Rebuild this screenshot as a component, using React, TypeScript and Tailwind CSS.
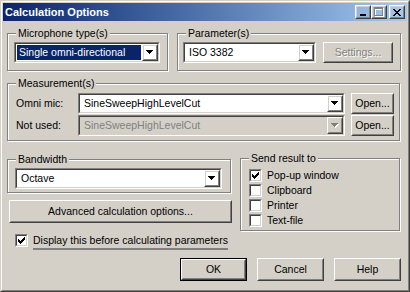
import type { ReactNode } from "react";

// classic win2000 bevels
function Raised({ className = "", children }: { className?: string; children?: ReactNode }) {
  return (
    <div className={`border border-t-white border-l-white border-r-[#404040] border-b-[#404040] ${className}`}>
      <div className="h-full w-full border border-t-[#D4D0C8] border-l-[#D4D0C8] border-r-[#808080] border-b-[#808080] flex items-center justify-center">
        {children}
      </div>
    </div>
  );
}

function Sunken({
  className = "",
  inner = "bg-white",
  children
}: {
  className?: string;
  inner?: string;
  children?: ReactNode;
}) {
  return (
    <div className={`border border-t-[#808080] border-l-[#808080] border-r-white border-b-white ${className}`}>
      <div className={`h-full w-full border border-t-[#404040] border-l-[#404040] border-r-[#D4D0C8] border-b-[#D4D0C8] ${inner}`}>
        {children}
      </div>
    </div>
  );
}

function Arrow({ disabled }: { disabled?: boolean }) {
  const d = "M0 0H7V1H6V2H5V3H4V4H3V3H2V2H1V1H0Z";
  return (
    <svg width="8" height="5" viewBox="0 0 8 5" shapeRendering="crispEdges">
      {disabled && <path d={d} fill="#fff" transform="translate(1 1)" />}
      <path d={d} fill={disabled ? "#808080" : "#000"} />
    </svg>
  );
}

function Combo({
  value,
  className,
  selected,
  disabled
}: {
  value: string;
  className: string;
  selected?: boolean;
  disabled?: boolean;
}) {
  return (
    <Sunken className={`h-[21px] ${className}`} inner={disabled ? "bg-[#D4D0C8]" : "bg-white"}>
      <div className="flex h-full">
        <div className="flex-1 flex items-center p-px min-w-0">
          {selected ? (
            <span className="h-full w-full flex items-center bg-[#0A246A] text-white pl-[2px]">{value}</span>
          ) : (
            <span className={`pl-[3px] ${disabled ? "text-[#808080]" : ""}`}>{value}</span>
          )}
        </div>
        <Raised className="w-[16px] h-full shrink-0">
          <Arrow disabled={disabled} />
        </Raised>
      </div>
    </Sunken>
  );
}

function Button({
  label,
  className,
  disabled,
  isDefault
}: {
  label: string;
  className: string;
  disabled?: boolean;
  isDefault?: boolean;
}) {
  const text = disabled ? (
    <span className="text-[#808080] [text-shadow:1px_1px_0_#fff]">{label}</span>
  ) : (
    <span>{label}</span>
  );
  if (isDefault) {
    return (
      <div className={`border border-black ${className}`}>
        <Raised className="w-full h-full">{text}</Raised>
      </div>
    );
  }
  return <Raised className={className}>{text}</Raised>;
}

function Check({ checked }: { checked?: boolean }) {
  return (
    <Sunken className="w-[13px] h-[13px] shrink-0">
      {checked && (
        <svg width="7" height="7" viewBox="0 0 7 7" shapeRendering="crispEdges" className="m-px">
          <path
            d="M6 0H7V3H6V4H5V5H4V6H3V7H2V6H1V5H0V2H1V3H2V4H3V3H4V2H5V1H6Z"
            fill="#000"
          />
        </svg>
      )}
    </Sunken>
  );
}

function Group({ label, className, children }: { label: string; className: string; children?: ReactNode }) {
  return (
    <div className={`relative border border-[#808080] shadow-[inset_1px_1px_0_#fff,1px_1px_0_#fff] ${className}`}>
      <span className="absolute left-[8px] -top-[7px] px-[2px] bg-[#D4D0C8] leading-[13px] whitespace-nowrap">
        {label}
      </span>
      {children}
    </div>
  );
}

function CheckRow({ label, checked }: { label: string; checked?: boolean }) {
  return (
    <div className="flex items-center h-[15px] gap-[5px]">
      <Check checked={checked} />
      <span>{label}</span>
    </div>
  );
}

export default function App() {
  return (
    <div className="w-[410px] h-[292px] bg-[#D4D0C8] font-['Liberation_Sans',Arial,sans-serif] text-[10.5px] text-black border border-t-[#D4D0C8] border-l-[#D4D0C8] border-r-[#404040] border-b-[#404040]">
      <div className="h-full border border-t-white border-l-white border-r-[#808080] border-b-[#808080] p-px flex flex-col">
        {/* Title bar */}
        <div className="h-[18px] shrink-0 flex items-center bg-gradient-to-r from-[#0A246A] to-[#A6CAF0] pl-[2px] pr-[2px]">
          <span className="flex-1 text-white font-bold text-[11px]">Calculation Options</span>
          <Raised className="w-[16px] h-[14px]">
            <svg width="8" height="7" viewBox="0 0 8 7" shapeRendering="crispEdges">
              <rect x="1" y="5" width="6" height="2" fill="#000" />
            </svg>
          </Raised>
          <Raised className="w-[16px] h-[14px]">
            <svg width="10" height="10" viewBox="0 0 10 10" shapeRendering="crispEdges">
              <path d="M1 1H10V10H1ZM2 3V9H9V3Z" fill="#fff" fillRule="evenodd" />
              <path d="M0 0H9V9H0ZM1 2V8H8V2Z" fill="#808080" fillRule="evenodd" />
            </svg>
          </Raised>
          <Raised className="w-[16px] h-[14px] ml-[2px]">
            <svg width="8" height="7" viewBox="0 0 8 7" shapeRendering="crispEdges">
              <path
                d="M0 0H2V1H3V2H5V1H6V0H8V1H7V2H6V3H5V4H6V5H7V6H8V7H6V6H5V5H3V6H2V7H0V6H1V5H2V4H3V3H2V2H1V1H0Z"
                fill="#000"
              />
            </svg>
          </Raised>
        </div>

        {/* Body */}
        <div className="flex flex-col pl-[4px]">
          <div className="flex mt-[12px]">
            <Group label="Microphone type(s)" className="w-[161px] h-[38px] pl-[6px] pt-[8px]">
              <Combo value="Single omni-directional" className="w-[146px]" selected />
            </Group>
            <Group label="Parameter(s)" className="ml-[9px] w-[224px] h-[38px] pl-[5px] pt-[8px] flex items-start">
              <Combo value="ISO 3382" className="w-[133px]" />
              <Button label="Settings..." className="ml-[7px] w-[70px] h-[21px]" disabled />
            </Group>
          </div>

          <Group label="Measurement(s)" className="mt-[12px] w-[393px] h-[58px] pl-[8px] pt-[9px] flex flex-col gap-px">
            <div className="flex items-center">
              <span className="w-[62px]">Omni mic:</span>
              <Combo value="SineSweepHighLevelCut" className="w-[267px]" />
              <Button label="Open..." className="ml-[6px] w-[43px] h-[21px]" />
            </div>
            <div className="flex items-center">
              <span className="w-[62px]">Not used:</span>
              <Combo value="SineSweepHighLevelCut" className="w-[267px]" disabled />
              <Button label="Open..." className="ml-[6px] w-[43px] h-[21px]" />
            </div>
          </Group>

          <div className="flex mt-[17px] items-start">
            <div className="flex flex-col w-[224px]">
              <Group label="Bandwidth" className="mt-px h-[34px] pl-[7px] pt-[8px]">
                <Combo value="Octave" className="w-[207px]" />
              </Group>
              <Button label="Advanced calculation options..." className="mt-[7px] ml-[2px] w-[223px] h-[23px]" />
            </div>
            <Group label="Send result to" className="ml-[9px] w-[160px] h-[73px] pl-[8px] pt-[9px] flex flex-col">
              <CheckRow label="Pop-up window" checked />
              <CheckRow label="Clipboard" />
              <CheckRow label="Printer" />
              <CheckRow label="Text-file" />
            </Group>
          </div>

          <div className="flex items-start mt-[3px] ml-[8px] h-[16px] gap-[5px]">
            <Check checked />
            <div className="flex flex-col">
              <span className="leading-[13px]">Display this before calculating parameters</span>
              <div className="h-[2px] bg-[#808080] mt-px" />
            </div>
          </div>

          <div className="flex justify-end gap-[10px] mt-[8px] pr-[6px]">
            <Button label="OK" className="w-[67px] h-[23px]" isDefault />
            <Button label="Cancel" className="w-[67px] h-[23px]" />
            <Button label="Help" className="w-[67px] h-[23px]" />
          </div>
        </div>
      </div>
    </div>
  );
}
